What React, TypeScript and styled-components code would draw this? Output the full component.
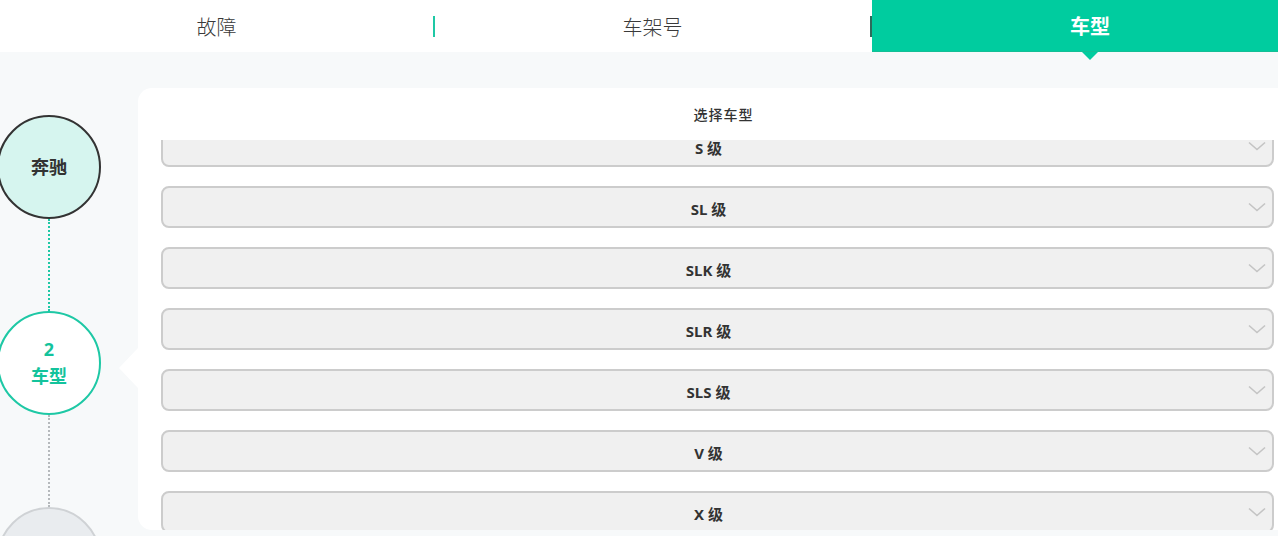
import { createGlobalStyle } from 'styled-components';
import styled from 'styled-components';

const GREEN = '#00cc9f';
const TEAL = '#1ec8a5';

const GlobalStyle = createGlobalStyle`
  html, body {
    margin: 0;
    padding: 0;
    background: #f7f9fa;
    overflow: hidden;
    font-family: "Noto Sans", "Noto Sans CJK SC", sans-serif;
  }
`;

const Page = styled.div`
  width: 1278px;
  height: 536px;
  overflow: hidden;
  display: flex;
  flex-direction: column;
`;

const TabBar = styled.div`
  display: flex;
  align-items: center;
  height: 52px;
  background: #ffffff;
  flex-shrink: 0;
`;

const Tab = styled.div<{ $width: number; $active?: boolean }>`
  position: relative;
  flex: 0 0 ${({ $width }) => $width}px;
  height: 52px;
  display: flex;
  align-items: center;
  justify-content: center;
  font-family: "Noto Sans CJK SC", sans-serif;
  font-size: 20px;
  font-weight: ${({ $active }) => ($active ? 700 : 300)};
  color: ${({ $active }) => ($active ? '#ffffff' : '#3a3a3a')};
  background: ${({ $active }) => ($active ? GREEN : 'transparent')};
  border-bottom: ${({ $active }) => ($active ? '1px solid #14bf95' : 'none')};
  box-sizing: border-box;

  ${({ $active }) =>
    $active &&
    `
    &::after {
      content: '';
      position: absolute;
      left: 50%;
      bottom: -9px;
      margin-left: -8px;
      border-left: 8px solid transparent;
      border-right: 8px solid transparent;
      border-top: 8px solid ${GREEN};
    }
  `}
`;

const Divider = styled.span<{ $color: string }>`
  flex: 0 0 2px;
  height: 21px;
  background: ${({ $color }) => $color};
`;

const Main = styled.div`
  flex: 1;
  display: flex;
  min-height: 0;
`;

const StepColumn = styled.div`
  flex: 0 0 138px;
  display: flex;
  flex-direction: column;
  padding-top: 63px;
  box-sizing: border-box;
`;

const StepItem = styled.div<{ $pointer?: boolean }>`
  position: relative;
  width: 104px;
  margin-left: -3px;
  display: flex;
  flex-direction: column;
  align-items: center;

  ${({ $pointer }) =>
    $pointer &&
    `
    &::after {
      content: '';
      position: absolute;
      right: -37px;
      top: 37px;
      border-top: 20px solid transparent;
      border-bottom: 20px solid transparent;
      border-right: 19px solid #ffffff;
    }
  `}
`;

type StepState = 'done' | 'active' | 'todo';

const Circle = styled.div<{ $state: StepState }>`
  width: 104px;
  height: 104px;
  border-radius: 50%;
  box-sizing: border-box;
  border: 2px solid
    ${({ $state }) =>
      $state === 'done' ? '#333333' : $state === 'active' ? TEAL : '#cfd2d5'};
  background: ${({ $state }) =>
    $state === 'done' ? '#d6f5ef' : $state === 'active' ? '#ffffff' : '#e9ecef'};
  display: flex;
  flex-direction: column;
  align-items: center;
  justify-content: center;
  font-family: "Noto Sans", "Noto Sans CJK SC", sans-serif;
  font-size: 18px;
  font-weight: 700;
  line-height: 27px;
  color: ${({ $state }) => ($state === 'active' ? '#13c39c' : '#333333')};
`;

const Connector = styled.div<{ $color: string }>`
  width: 0;
  height: 92px;
  border-left: 2px dotted ${({ $color }) => $color};
`;

const Panel = styled.div`
  flex: 0 0 1160px;
  margin-top: 36px;
  height: 442px;
  background: #ffffff;
  border-radius: 14px;
  display: flex;
  flex-direction: column;
  padding: 0 24px 0 23px;
  box-sizing: border-box;
`;

const PanelTitle = styled.div`
  flex: 0 0 52px;
  display: flex;
  align-items: center;
  justify-content: center;
  font-family: "Noto Sans CJK SC", sans-serif;
  font-size: 14px;
  font-weight: 500;
  letter-spacing: 1px;
  color: #333333;
  padding: 0 0 0 12px;
  box-sizing: border-box;
`;

const ListViewport = styled.div`
  flex: 1;
  overflow: hidden;
`;

const List = styled.div`
  display: flex;
  flex-direction: column;
  gap: 19px;
  margin-top: -15px;
`;

const Row = styled.div`
  position: relative;
  height: 42px;
  flex-shrink: 0;
  box-sizing: border-box;
  border: 2px solid #cccccc;
  border-radius: 8px;
  background: #f0f0f0;
  display: flex;
  align-items: center;
  justify-content: center;
  padding: 3px 18px 0 0;
  font-family: "Noto Sans", "Noto Sans CJK SC", sans-serif;
  font-size: 15px;
  font-weight: 700;
  color: #333333;
`;

const Chevron = styled.svg`
  position: absolute;
  right: 6px;
  top: 50%;
  margin-top: -5px;
`;

const models = ['S 级', 'SL 级', 'SLK 级', 'SLR 级', 'SLS 级', 'V 级', 'X 级'];

function App() {
  return (
    <>
      <GlobalStyle />
      <Page>
        <TabBar>
          <Tab $width={433}>故障</Tab>
          <Divider $color={TEAL} />
          <Tab $width={435}>车架号</Tab>
          <Divider $color="#2d6b5b" />
          <Tab $width={436} $active>
            车型
          </Tab>
        </TabBar>
        <Main>
          <StepColumn>
            <StepItem>
              <Circle $state="done">奔驰</Circle>
              <Connector $color={TEAL} />
            </StepItem>
            <StepItem $pointer>
              <Circle $state="active">
                <span>2</span>
                <span>车型</span>
              </Circle>
              <Connector $color="#b5b9bc" />
            </StepItem>
            <StepItem>
              <Circle $state="todo" />
            </StepItem>
          </StepColumn>
          <Panel>
            <PanelTitle>选择车型</PanelTitle>
            <ListViewport>
              <List>
                {models.map((m) => (
                  <Row key={m}>
                    {m}
                    <Chevron width="18" height="10" viewBox="0 0 18 10">
                      <path
                        d="M1 1.5 L9 8.5 L17 1.5"
                        fill="none"
                        stroke="#c4c4c4"
                        strokeWidth="1.6"
                      />
                    </Chevron>
                  </Row>
                ))}
              </List>
            </ListViewport>
          </Panel>
        </Main>
      </Page>
    </>
  );
}

export default App;
